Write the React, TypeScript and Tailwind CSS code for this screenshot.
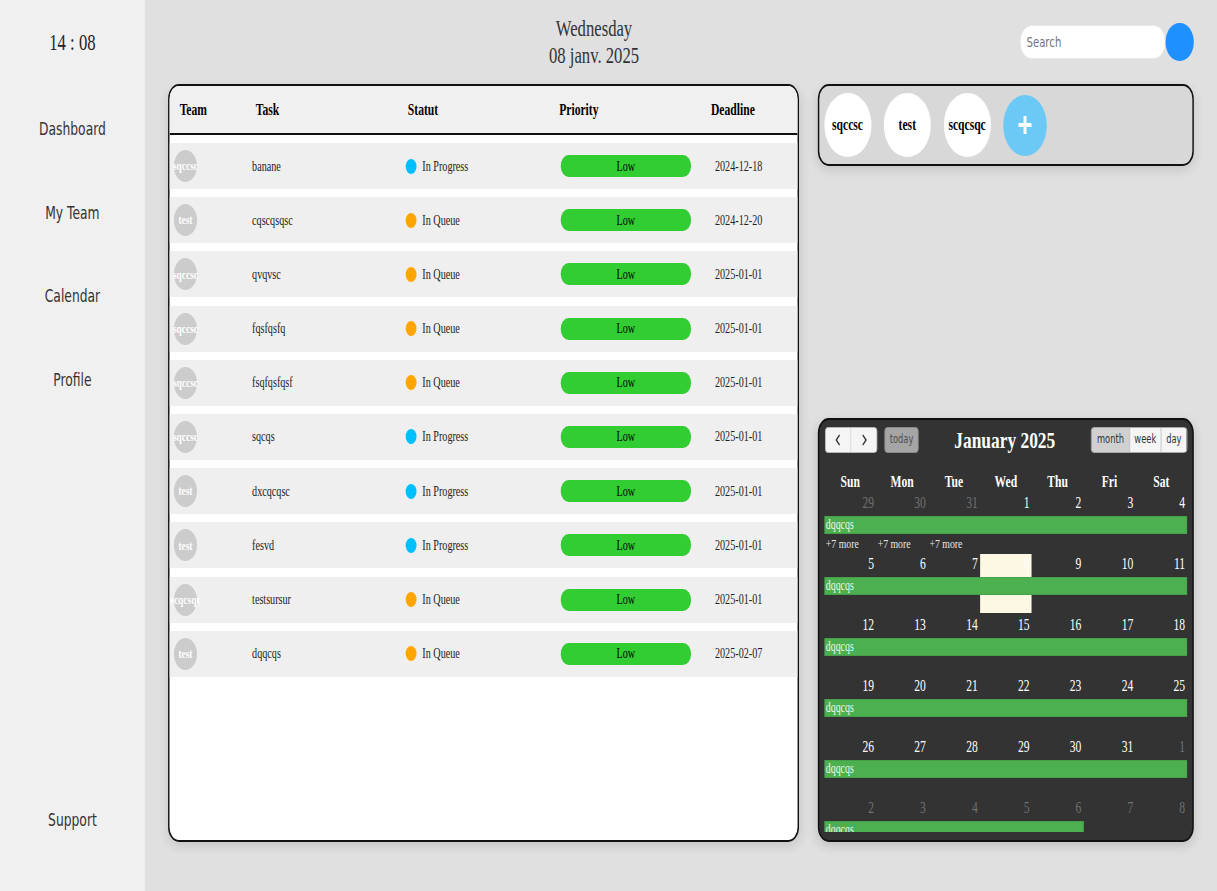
import React from "react";

const SERIF = "font-['Liberation_Serif','Times_New_Roman',serif]";
const SANS = "font-['DejaVu_Sans','Verdana',sans-serif]";

type Row = { team: string; task: string; status: "p" | "q"; date: string };

const rows: Row[] = [
  { team: "sqccsc", task: "banane", status: "p", date: "2024-12-18" },
  { team: "test", task: "cqscqsqsc", status: "q", date: "2024-12-20" },
  { team: "sqccsc", task: "qvqvsc", status: "q", date: "2025-01-01" },
  { team: "sqccsc", task: "fqsfqsfq", status: "q", date: "2025-01-01" },
  { team: "sqccsc", task: "fsqfqsfqsf", status: "q", date: "2025-01-01" },
  { team: "sqccsc", task: "sqcqs", status: "p", date: "2025-01-01" },
  { team: "test", task: "dxcqcqsc", status: "p", date: "2025-01-01" },
  { team: "test", task: "fesvd", status: "p", date: "2025-01-01" },
  { team: "scqcsqc", task: "testsursur", status: "q", date: "2025-01-01" },
  { team: "test", task: "dqqcqs", status: "q", date: "2025-02-07" },
];

type Day = { n: number; other?: boolean; today?: boolean };

const weeks: { days: Day[]; span: number; more?: boolean }[] = [
  {
    days: [
      { n: 29, other: true },
      { n: 30, other: true },
      { n: 31, other: true },
      { n: 1 },
      { n: 2 },
      { n: 3 },
      { n: 4 },
    ],
    span: 7,
    more: true,
  },
  {
    days: [{ n: 5 }, { n: 6 }, { n: 7 }, { n: 8, today: true }, { n: 9 }, { n: 10 }, { n: 11 }],
    span: 7,
  },
  { days: [12, 13, 14, 15, 16, 17, 18].map((n) => ({ n })), span: 7 },
  { days: [19, 20, 21, 22, 23, 24, 25].map((n) => ({ n })), span: 7 },
  {
    days: [
      { n: 26 },
      { n: 27 },
      { n: 28 },
      { n: 29 },
      { n: 30 },
      { n: 31 },
      { n: 1, other: true },
    ],
    span: 7,
  },
  { days: [2, 3, 4, 5, 6, 7, 8].map((n) => ({ n, other: true })), span: 5 },
];

function Sidebar() {
  const items = ["Dashboard", "My Team", "Calendar", "Profile"];
  return (
    <aside className="w-[200px] h-[891px] shrink-0 bg-[#f0f0f0] flex flex-col">
      <div className={`h-[86px] flex items-center justify-center text-[23px] text-[#222] ${SERIF}`}>
        14 : 08
      </div>
      <nav className="mt-[2px] flex flex-col">
        {items.map((i) => (
          <div
            key={i}
            className={`h-[83.5px] flex items-center justify-center text-[17px] text-[#333] ${SANS}`}
          >
            {i}
          </div>
        ))}
      </nav>
      <div
        className={`mt-auto mb-[50px] h-[40px] flex items-center justify-center text-[17px] text-[#333] ${SANS}`}
      >
        Support
      </div>
    </aside>
  );
}

function Header() {
  return (
    <header className="h-[84px] flex items-center justify-between">
      <div />
      <div className={`text-center text-[23px] leading-[27px] text-[#333] ${SERIF}`}>
        <div>Wednesday</div>
        <div>08 janv. 2025</div>
      </div>
      <div className="flex items-center">
        <input
          placeholder="Search"
          className={`w-[201px] h-[34px] rounded-[16px] bg-white border border-[#e6e6e6] pl-[8px] text-[14px] text-[#333] placeholder:text-[#757575] outline-none ${SANS}`}
        />
        <div className="w-[39px] h-[38px] rounded-full bg-[#1e90ff]" />
      </div>
    </header>
  );
}

function TaskTable() {
  return (
    <div className="w-[871px] h-[758px] shrink-0 bg-white border-2 border-[#111] rounded-[15px] overflow-hidden shadow-[0_4px_12px_rgba(0,0,0,0.12)]">
      <div
        className={`h-[49px] bg-[#f0f0f0] border-b-2 border-[#111] grid grid-cols-[105px_210px_209px_209.5px_1fr] items-center pl-[14px] text-[16px] font-bold text-black ${SERIF}`}
      >
        <div>Team</div>
        <div>Task</div>
        <div>Statut</div>
        <div>Priority</div>
        <div>Deadline</div>
      </div>
      <div className={`flex flex-col gap-[8.2px] pt-[8px] text-[14px] text-[#222] ${SERIF}`}>
        {rows.map((r, i) => (
          <div
            key={i}
            className="h-[46px] bg-[#efefef] grid grid-cols-[108px_212px_214px_213px_1fr] items-center pl-[6px]"
          >
            <div className="w-[32px] h-[32px] rounded-full bg-[#cccccc] flex items-center justify-center">
              <span className="text-[13px] font-bold text-white whitespace-nowrap">{r.team}</span>
            </div>
            <div>{r.task}</div>
            <div className="flex items-center gap-[8px]">
              <span
                className={`w-[15px] h-[15px] rounded-full ${r.status === "p" ? "bg-[#00bfff]" : "bg-[#ffa500]"}`}
              />
              <span>{r.status === "p" ? "In Progress" : "In Queue"}</span>
            </div>
            <div>
              <div className="w-[180px] h-[22px] rounded-full bg-[#32cd32] flex items-center justify-center text-black">
                Low
              </div>
            </div>
            <div>{r.date}</div>
          </div>
        ))}
      </div>
    </div>
  );
}

function TeamCard() {
  const teams = ["sqccsc", "test", "scqcsqc"];
  return (
    <div className="h-[82px] bg-[#d8d8d8] border-2 border-[#111] rounded-[15px] flex items-center gap-[17.5px] pl-[6.5px] shadow-[0_4px_12px_rgba(0,0,0,0.12)]">
      {teams.map((t) => (
        <div
          key={t}
          className={`w-[65px] h-[64px] rounded-full bg-white flex items-center justify-center text-[16px] font-bold text-black ${SERIF}`}
        >
          {t}
        </div>
      ))}
      <div className="w-[60px] h-[61px] rounded-full bg-[#6cc9f5] flex items-center justify-center">
        <svg width="22" height="22" viewBox="0 0 22 22">
          <path d="M11 2 V20 M2 11 H20" stroke="white" strokeWidth="4" />
        </svg>
      </div>
    </div>
  );
}

function Chevron({ dir }: { dir: "l" | "r" }) {
  return (
    <svg width="12" height="14" viewBox="0 0 12 14">
      <path
        d={dir === "l" ? "M8 2 L3.5 7 L8 12" : "M4 2 L8.5 7 L4 12"}
        fill="none"
        stroke="#333"
        strokeWidth="1.8"
      />
    </svg>
  );
}

function CalendarCard() {
  return (
    <div className="h-[424px] bg-[#333333] border-2 border-[#111] rounded-[15px] px-[7px] pt-[7px] pb-[8px] flex flex-col shadow-[0_4px_12px_rgba(0,0,0,0.15)]">
      <div className="h-[26px] flex items-center justify-between pl-[1px] pr-[0px]">
        <div className="flex items-center">
          <div className="flex h-[26px] rounded-[4px] border border-[#bdbdbd] bg-[#f5f5f5] overflow-hidden">
            <div className="w-[35px] flex items-center justify-center border-r border-[#cfcfcf]">
              <Chevron dir="l" />
            </div>
            <div className="w-[35px] flex items-center justify-center">
              <Chevron dir="r" />
            </div>
          </div>
          <div
            className={`ml-[10px] w-[47px] h-[26px] rounded-[4px] bg-[#a5a5a5] border border-[#8f8f8f] flex items-center justify-center text-[11.5px] text-[#4f4f4f] ${SANS}`}
          >
            today
          </div>
        </div>
        <div className={`text-[24px] font-bold text-white leading-none ${SERIF}`}>January 2025</div>
        <div
          className={`flex h-[26px] rounded-[4px] border border-[#bdbdbd] overflow-hidden text-[11.5px] text-[#333] ${SANS}`}
        >
          <div className="w-[53px] bg-[#d0d0d0] flex items-center justify-center border-r border-[#c4c4c4]">
            month
          </div>
          <div className="w-[43px] bg-[#f5f5f5] flex items-center justify-center border-r border-[#cfcfcf]">
            week
          </div>
          <div className="w-[35px] bg-[#f5f5f5] flex items-center justify-center">day</div>
        </div>
      </div>
      <div
        className={`mt-[17px] h-[22px] grid grid-cols-7 items-center text-center text-[16px] font-bold text-white ${SERIF}`}
      >
        {["Sun", "Mon", "Tue", "Wed", "Thu", "Fri", "Sat"].map((d) => (
          <div key={d}>{d}</div>
        ))}
      </div>
      <div className={`h-[340px] overflow-hidden ${SERIF}`}>
        {weeks.map((w, wi) => (
          <div key={wi} className="relative h-[61px]">
            <div className="absolute inset-0 grid grid-cols-7">
              {w.days.map((d, di) => (
                <div key={di} className={d.today ? "bg-[#fcf8e3] my-[1px]" : ""} />
              ))}
            </div>
            <div className="relative">
              <div className="h-[22px] grid grid-cols-7 text-[16px] leading-[22px]">
                {w.days.map((d, di) => (
                  <div
                    key={di}
                    className={`text-right pr-[3px] ${d.other ? "text-[#707070]" : "text-white"}`}
                  >
                    {d.n}
                  </div>
                ))}
              </div>
              <div className="mt-[2px] grid grid-cols-7">
                <div
                  className={`${w.span === 7 ? "col-span-7" : "col-span-5"} h-[18px] bg-[#4caf50] border border-[#45a049] pl-[1px] text-[13.6px] leading-[16px] text-[#eef7ee] overflow-hidden`}
                >
                  dqqcqs
                </div>
              </div>
              {w.more && (
                <div className="h-[19px] grid grid-cols-7 text-[13.5px] leading-[19px] text-[#e6e6e6]">
                  {["+7 more", "+7 more", "+7 more"].map((m, mi) => (
                    <div key={mi} className="pl-[2px] whitespace-nowrap">
                      {m}
                    </div>
                  ))}
                </div>
              )}
            </div>
          </div>
        ))}
      </div>
    </div>
  );
}

export default function App() {
  return (
    <div className="w-[1217px] h-[891px] overflow-hidden">
      <div className="w-[1680px] h-[891px] origin-top-left scale-x-[0.7244] flex">
        <Sidebar />
        <main className="flex-1 h-[891px] bg-[#e0e0e0] px-[32px]">
          <Header />
          <div className="flex gap-[26px]">
            <TaskTable />
            <div className="w-[519px] h-[758px] flex flex-col justify-between">
              <TeamCard />
              <CalendarCard />
            </div>
          </div>
        </main>
      </div>
    </div>
  );
}
